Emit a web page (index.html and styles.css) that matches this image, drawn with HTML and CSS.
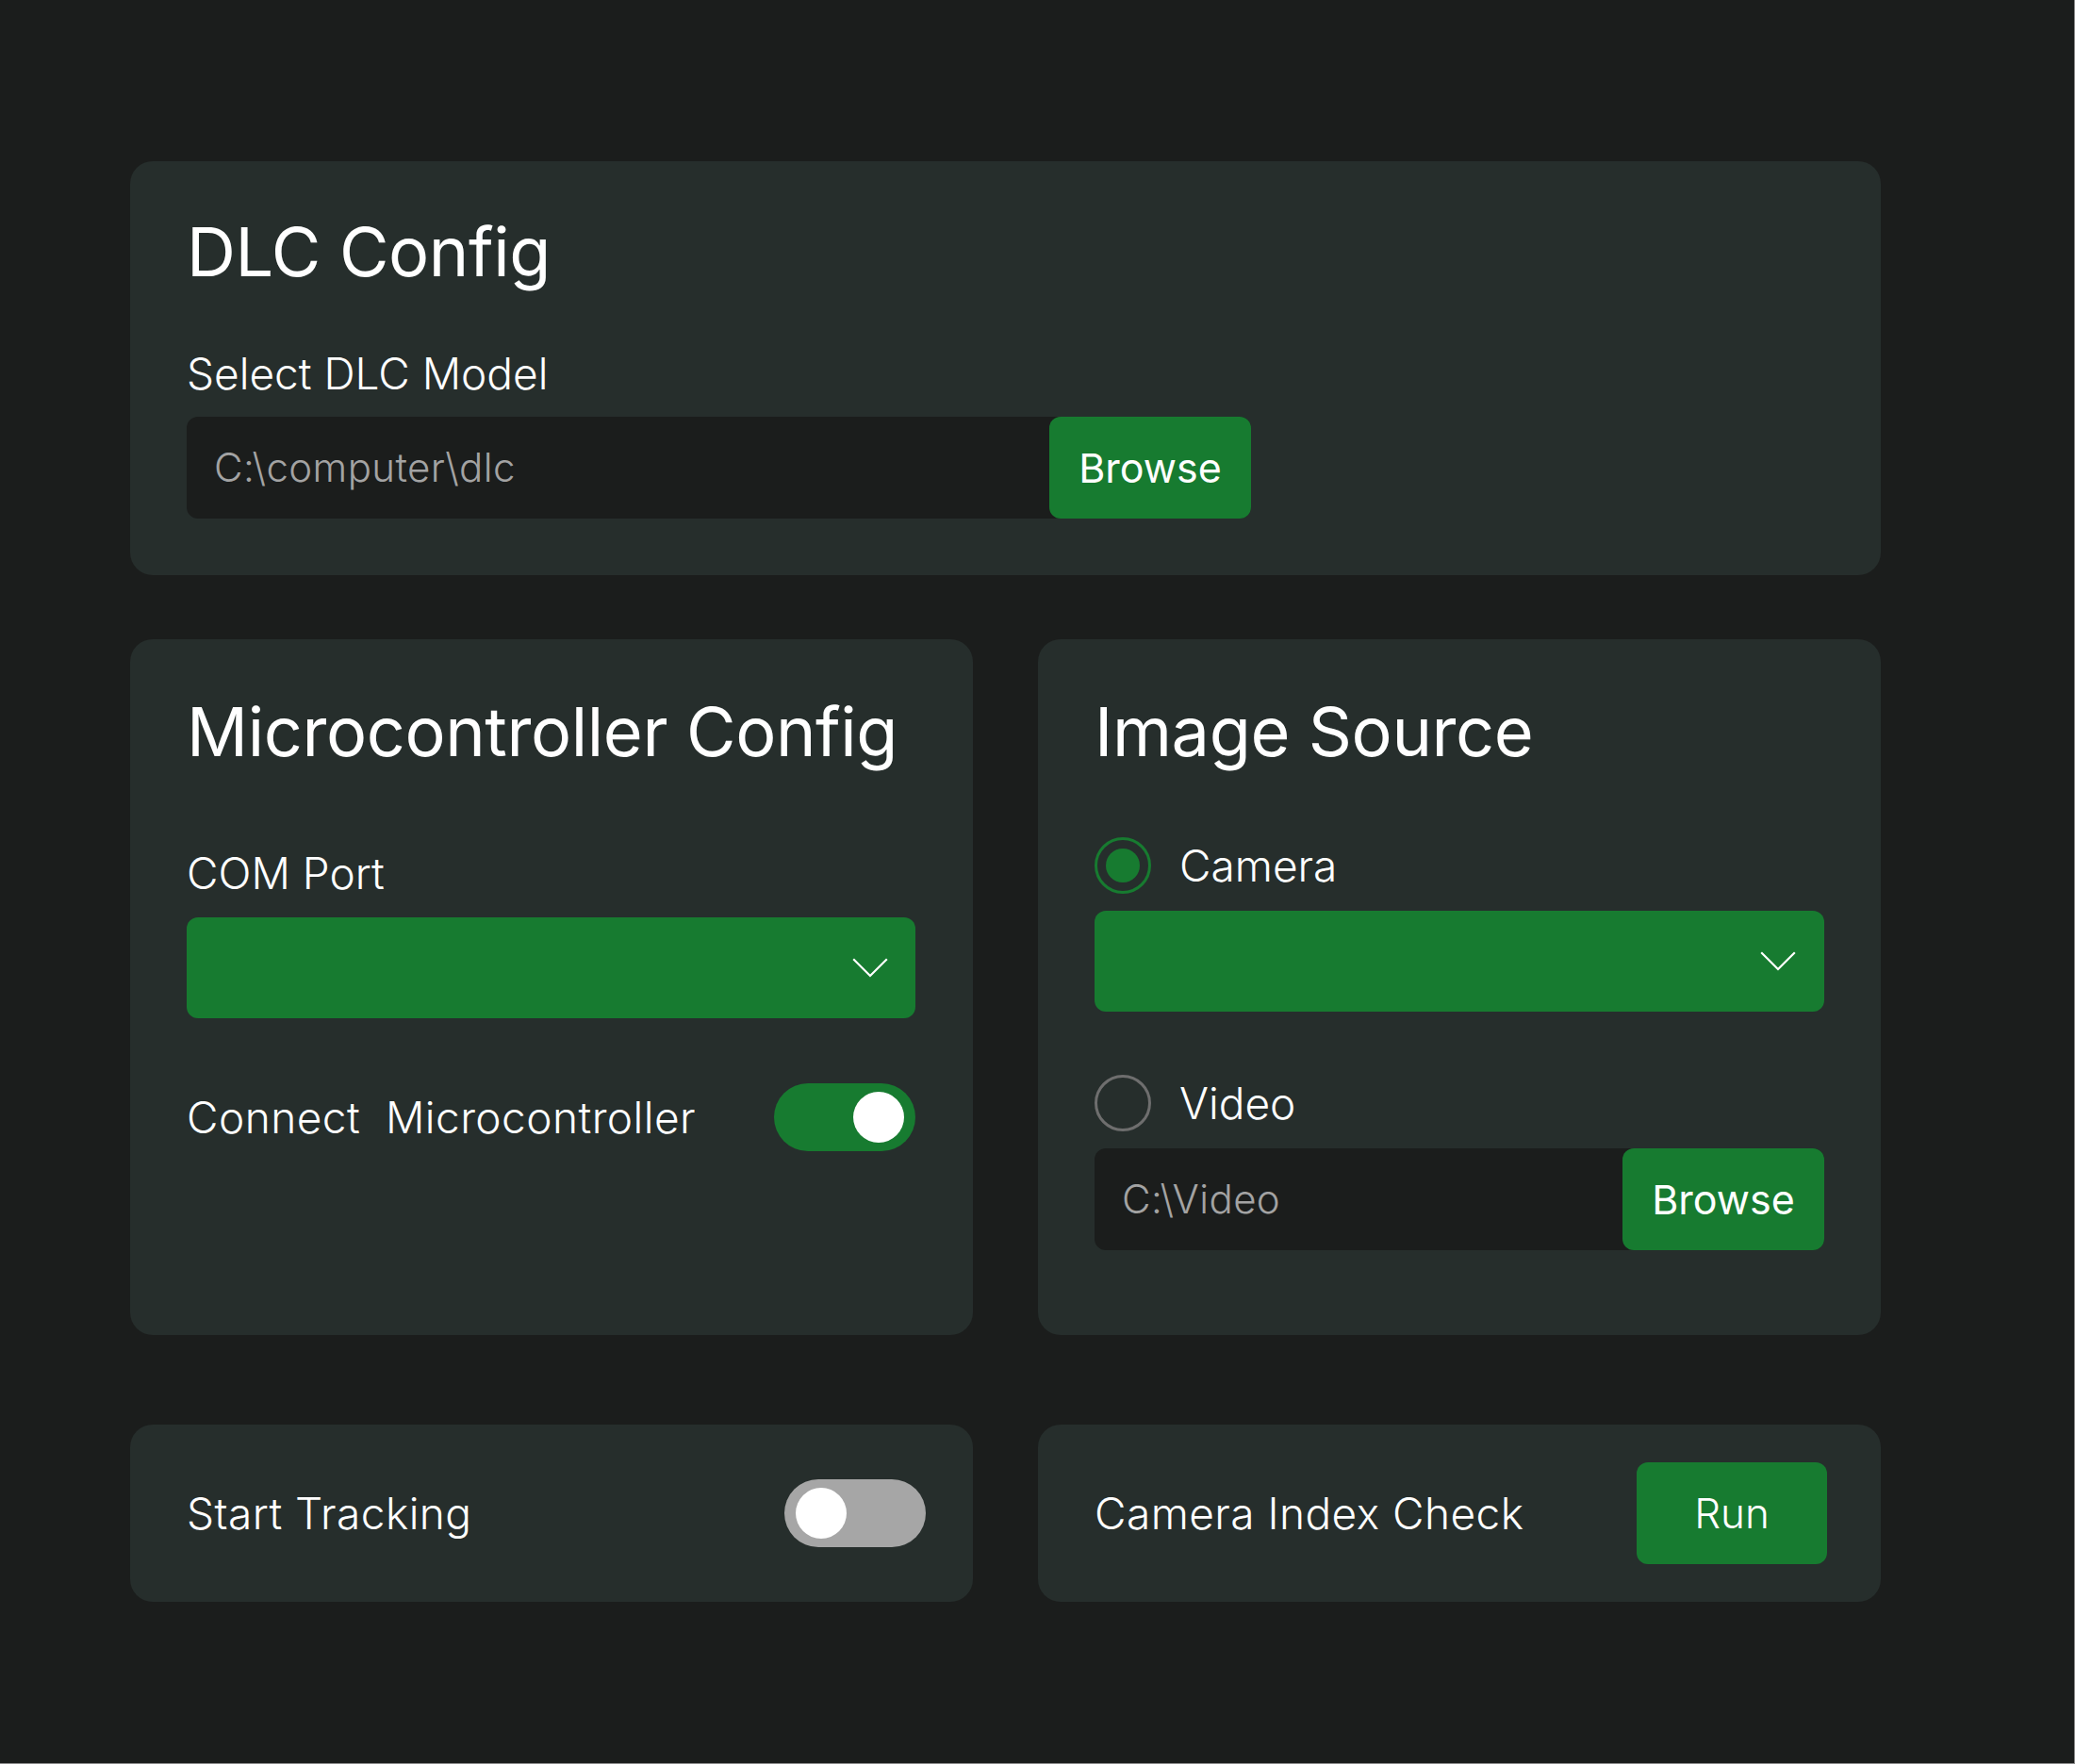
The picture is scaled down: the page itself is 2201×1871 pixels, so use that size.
FILE: index.html
```html
<!DOCTYPE html>
<html lang="en">
<head>
<meta charset="utf-8">
<title>DLC Tracker</title>
<link rel="stylesheet" href="styles.css">
</head>
<body>
<div class="page">
  <div class="stack">
    <section class="card card-dlc">
      <h2 class="title">DLC Config</h2>
      <div class="label label-dlc">Select DLC Model</div>
      <div class="file-field field-dlc">
        <span class="placeholder">C:\computer\dlc</span>
        <button class="browse">Browse</button>
      </div>
    </section>

    <div class="row">
      <section class="card card-micro">
        <h2 class="title">Microcontroller Config</h2>
        <div class="label label-com">COM Port</div>
        <div class="select select-com">
          <svg class="chev" width="38" height="21" viewBox="0 0 38 21"><path d="M1.2 1.2 L19 19 L36.8 1.2" fill="none" stroke="#ffffff" stroke-width="2.2"/></svg>
        </div>
        <div class="toggle-row connect-row">
          <span class="label label-wide">Connect&nbsp; Microcontroller</span>
          <span class="toggle on"><span class="knob"></span></span>
        </div>
      </section>

      <section class="card card-image">
        <h2 class="title">Image Source</h2>
        <div class="radio-row camera-row">
          <span class="radio checked"><span class="dot"></span></span>
          <span class="label">Camera</span>
        </div>
        <div class="select select-cam">
          <svg class="chev" width="38" height="21" viewBox="0 0 38 21"><path d="M1.2 1.2 L19 19 L36.8 1.2" fill="none" stroke="#ffffff" stroke-width="2.2"/></svg>
        </div>
        <div class="radio-row video-row">
          <span class="radio"></span>
          <span class="label">Video</span>
        </div>
        <div class="file-field field-video">
          <span class="placeholder">C:\Video</span>
          <button class="browse">Browse</button>
        </div>
      </section>
    </div>

    <div class="row row-bottom">
      <section class="card card-small card-track">
        <span class="label label-wide">Start Tracking</span>
        <span class="toggle off"><span class="knob"></span></span>
      </section>
      <section class="card card-small card-index">
        <span class="label label-wide">Camera Index Check</span>
        <button class="run">Run</button>
      </section>
    </div>
  </div>
</div>
</body>
</html>
```

FILE: styles.css
```css
* { box-sizing: border-box; }

html, body {
  margin: 0;
  padding: 0;
  background: #8a8a8a;
}

body {
  font-family: "Inter", "Noto Sans", "Liberation Sans", sans-serif;
  color: #ffffff;
}

.page {
  width: 2200px;
  height: 1870px;
  background: #1b1d1c;
  padding: 171px 0 0 138px;
}

.stack {
  width: 1857px;
  display: flex;
  flex-direction: column;
}

.card {
  background: #262e2c;
  border-radius: 24px;
}

.title {
  margin: 0;
  font-size: 72px;
  line-height: 72px;
  font-weight: 400;
  letter-spacing: -0.4px;
  white-space: nowrap;
}

.label {
  font-size: 46px;
  line-height: 46px;
  font-weight: 300;
  white-space: nowrap;
}
.label-wide { letter-spacing: 0.45px; }

/* DLC card */
.card-dlc {
  padding: 60px 60px 60px 60px;
}
.label-dlc { margin-top: 70px; }
.field-dlc {
  margin-top: 23px;
  width: 1129px;
}

.file-field {
  height: 108px;
  background: #1b1d1c;
  border-radius: 12px;
  display: flex;
  align-items: center;
  justify-content: space-between;
  padding-left: 29px;
}

.placeholder {
  font-size: 42px;
  line-height: 42px;
  font-weight: 300;
  letter-spacing: 0.4px;
  color: #a3a3a3;
}

.browse, .run {
  height: 108px;
  width: 214px;
  border: none;
  border-radius: 12px;
  background: #177b30;
  color: #ffffff;
  font-family: inherit;
  font-size: 43px;
  font-weight: 400;
  padding: 0;
}

/* middle row */
.row {
  display: grid;
  grid-template-columns: 894px 894px;
  column-gap: 69px;
  margin-top: 68px;
}

.card-micro {
  padding: 62px 61px 0 60px;
}
.label-com { margin-top: 91px; }

.select {
  height: 107px;
  background: #177b30;
  border-radius: 12px;
  display: flex;
  align-items: center;
  justify-content: flex-end;
  padding-right: 29px;
}
.select-com { margin-top: 24px; }

.toggle-row {
  display: flex;
  align-items: center;
  justify-content: space-between;
}
.connect-row { margin-top: 69px; height: 72px; }

.toggle {
  width: 150px;
  height: 72px;
  border-radius: 36px;
  display: flex;
  align-items: center;
  padding: 0 12px;
}
.toggle.on { background: #177b30; justify-content: flex-end; }
.toggle.off { background: #a6a6a6; justify-content: flex-start; }
.knob {
  width: 54px;
  height: 54px;
  border-radius: 50%;
  background: #ffffff;
}

.card-image {
  padding: 62px 60px 90px 60px;
}

.radio-row {
  display: flex;
  align-items: center;
  gap: 30px;
  height: 60px;
}
.camera-row { margin-top: 76px; }
.select-cam { margin-top: 18px; padding-right: 30px; }
.video-row { margin-top: 67px; }
.field-video { margin-top: 18px; }

.radio {
  width: 60px;
  height: 60px;
  border-radius: 50%;
  border: 3px solid #6e6e6e;
  display: flex;
  align-items: center;
  justify-content: center;
  flex: none;
}
.radio.checked { border-color: #177b30; }
.dot {
  width: 36px;
  height: 36px;
  border-radius: 50%;
  background: #177b30;
}

/* bottom row */
.row-bottom { margin-top: 95px; }

.card-small {
  height: 188px;
  display: flex;
  align-items: center;
  justify-content: space-between;
}
.card-track { padding: 0 50px 0 60px; }
.card-index { padding: 0 57px 0 60px; }

.run {
  width: 202px;
  font-size: 44px;
  font-weight: 300;
}
```
